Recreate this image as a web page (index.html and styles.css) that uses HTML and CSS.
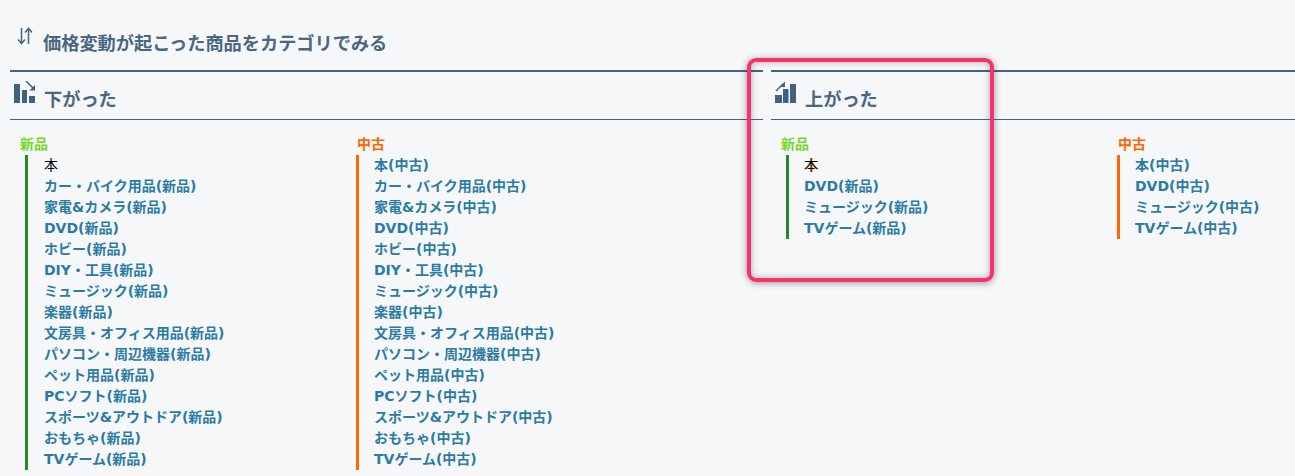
FILE: index.html
```html
<!DOCTYPE html>
<html lang="ja">
<head>
    <meta charset="UTF-8">
    <title>価格変動</title>
    <link rel="stylesheet" href="styles.css">
</head>
<body>
    <h2 class="page-title">
        <svg class="icon-sort" width="16" height="18" viewBox="0 0 16 18" fill="none" stroke="#456480" stroke-width="1.5">
            <path d="M4.5 1v15M1 12.5l3.5 4 3.5-4"/>
            <path d="M11.5 17V2M8 5.5l3.5-4 3.5 4"/>
        </svg>
        価格変動が起こった商品をカテゴリでみる
    </h2>

    <div class="panels">
        <section class="panel">
            <h3 class="panel-title">
                <svg class="icon-chart" width="22" height="22" viewBox="0 0 22 22" fill="#3f6280">
                    <rect x="0" y="3" width="6" height="19"/>
                    <rect x="8" y="9" width="5" height="13"/>
                    <rect x="15" y="15" width="6" height="7"/>
                    <path d="M12 0l7 7" stroke="#3f6280" stroke-width="1.5" fill="none"/>
                    <path d="M21 4v5.5h-5.5z"/>
                </svg>
                下がった
            </h3>
            <div class="lists">
                <div class="group new">
                    <div class="group-label">新品</div>
                    <ul>
                        <li class="plain">本</li>
                        <li><a href="#">カー・バイク用品(新品)</a></li>
                        <li><a href="#">家電&amp;カメラ(新品)</a></li>
                        <li><a href="#">DVD(新品)</a></li>
                        <li><a href="#">ホビー(新品)</a></li>
                        <li><a href="#">DIY・工具(新品)</a></li>
                        <li><a href="#">ミュージック(新品)</a></li>
                        <li><a href="#">楽器(新品)</a></li>
                        <li><a href="#">文房具・オフィス用品(新品)</a></li>
                        <li><a href="#">パソコン・周辺機器(新品)</a></li>
                        <li><a href="#">ペット用品(新品)</a></li>
                        <li><a href="#">PCソフト(新品)</a></li>
                        <li><a href="#">スポーツ&amp;アウトドア(新品)</a></li>
                        <li><a href="#">おもちゃ(新品)</a></li>
                        <li><a href="#">TVゲーム(新品)</a></li>
                    </ul>
                </div>
                <div class="group used">
                    <div class="group-label">中古</div>
                    <ul>
                        <li><a href="#">本(中古)</a></li>
                        <li><a href="#">カー・バイク用品(中古)</a></li>
                        <li><a href="#">家電&amp;カメラ(中古)</a></li>
                        <li><a href="#">DVD(中古)</a></li>
                        <li><a href="#">ホビー(中古)</a></li>
                        <li><a href="#">DIY・工具(中古)</a></li>
                        <li><a href="#">ミュージック(中古)</a></li>
                        <li><a href="#">楽器(中古)</a></li>
                        <li><a href="#">文房具・オフィス用品(中古)</a></li>
                        <li><a href="#">パソコン・周辺機器(中古)</a></li>
                        <li><a href="#">ペット用品(中古)</a></li>
                        <li><a href="#">PCソフト(中古)</a></li>
                        <li><a href="#">スポーツ&amp;アウトドア(中古)</a></li>
                        <li><a href="#">おもちゃ(中古)</a></li>
                        <li><a href="#">TVゲーム(中古)</a></li>
                    </ul>
                </div>
            </div>
        </section>

        <section class="panel panel-up">
            <h3 class="panel-title">
                <svg class="icon-chart" width="22" height="22" viewBox="0 0 22 22" fill="#3f6280">
                    <rect x="0" y="14" width="7" height="8"/>
                    <rect x="8" y="8" width="5.5" height="14"/>
                    <rect x="15" y="3" width="6" height="19"/>
                    <path d="M1 10l7-7" stroke="#3f6280" stroke-width="1.5" fill="none"/>
                    <path d="M10 .5V6H4.500z"/>
                </svg>
                上がった
            </h3>
            <div class="lists">
                <div class="group new">
                    <div class="group-label">新品</div>
                    <ul>
                        <li class="plain">本</li>
                        <li><a href="#">DVD(新品)</a></li>
                        <li><a href="#">ミュージック(新品)</a></li>
                        <li><a href="#">TVゲーム(新品)</a></li>
                    </ul>
                </div>
                <div class="group used">
                    <div class="group-label">中古</div>
                    <ul>
                        <li><a href="#">本(中古)</a></li>
                        <li><a href="#">DVD(中古)</a></li>
                        <li><a href="#">ミュージック(中古)</a></li>
                        <li><a href="#">TVゲーム(中古)</a></li>
                    </ul>
                </div>
            </div>
        </section>
    </div>

    <div class="highlight"></div>
</body>
</html>
```

FILE: styles.css
```css
html, body {
    height: 476px;
    overflow: hidden;
}

body {
    font-family: "DejaVu Sans", "Noto Sans CJK JP", sans-serif;
    background-color: #f6f7f9;
    margin: 0;
    padding: 0 0 0 10px;
    position: relative;
}

.page-title {
    display: flex;
    align-items: flex-start;
    gap: 10px;
    height: 70px;
    box-sizing: border-box;
    margin: 0;
    padding: 27px 0 0 7px;
    font-size: 18.2px;
    line-height: 34px;
    font-weight: 700;
    color: #4a6681;
}

.icon-sort {
    flex: none;
}

.panels {
    display: grid;
    grid-template-columns: 753px 1fr;
    gap: 8px;
}

.panel {
    border-top: 2px solid #456480;
    min-width: 0;
}

.panel-title {
    display: flex;
    align-items: flex-start;
    gap: 8px;
    height: 47px;
    margin: 0;
    padding: 0 0 0 4px;
    border-bottom: 1px solid #456480;
    font-size: 18.2px;
    line-height: 56px;
    font-weight: 700;
    color: #4a6681;
}

.icon-chart {
    flex: none;
    margin-top: 9px;
}

.lists {
    display: flex;
    padding: 14px 0 0 10px;
}

.group {
    flex: 0 0 337px;
}

.group.used {
    flex: 1 1 0;
}

.group-label {
    font-size: 14px;
    line-height: 21px;
    font-weight: 700;
}

.group ul {
    list-style: none;
    margin: 0;
    padding: 0 0 0 16px;
    border-left: 3px solid;
}

.panel-up .group ul,
.group.used ul {
    padding-left: 15px;
}

.group li {
    font-size: 14px;
    line-height: 21px;
    font-weight: 700;
    white-space: nowrap;
}

.group a {
    color: #2b7ba5;
    text-decoration: none;
}

.group .plain {
    font-weight: 400;
    color: #000;
}

.panel-up .plain {
    text-shadow: 1px 0 #e8a04a;
}

.new .group-label {
    color: #74d82c;
}

.new ul {
    margin-left: 5px;
    border-color: #228b22;
}

.used .group-label {
    color: #ff6600;
}

.used ul {
    margin-left: -1px;
    border-color: #ff6600;
}

.highlight {
    position: absolute;
    left: 747px;
    top: 58px;
    width: 239px;
    height: 216px;
    border: 4px solid #f9306c;
    border-radius: 9px;
    box-shadow: 0 1px 7px rgba(0, 0, 0, 0.4), inset 0 0 7px rgba(0, 0, 0, 0.3);
}
```
